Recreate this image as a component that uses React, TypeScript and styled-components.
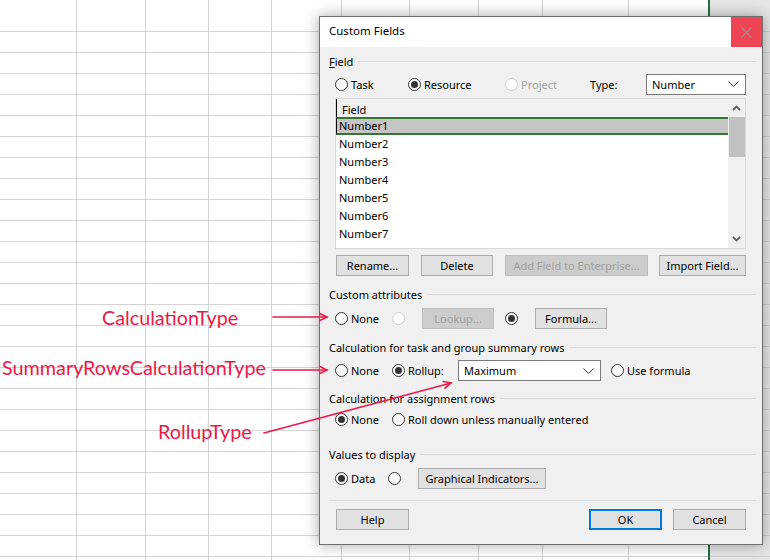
import { createGlobalStyle, styled } from "styled-components";

const GlobalStyle = createGlobalStyle`
  html, body {
    margin: 0;
    padding: 0;
  }
  body {
    width: 770px;
    height: 560px;
    overflow: hidden;
    background: #ffffff;
    font-family: "Noto Sans", "Open Sans", sans-serif;
  }
`;

const Desktop = styled.div`
  position: relative;
  width: 770px;
  height: 560px;
  overflow: hidden;
`;

// spreadsheet behind the dialog
const Sheet = styled.div`
  display: flex;
  height: 100%;
`;

const SheetColumn = styled.div<{ $w: number; $last?: boolean }>`
  flex: 0 0 ${(p) => p.$w}px;
  box-sizing: border-box;
  border-right: ${(p) => (p.$last ? "none" : "1px solid #d4d4d4")};
  background-image: repeating-linear-gradient(to bottom, transparent 0 20px, #d4d4d4 20px 21px);
  background-position: 0 11px;
`;

const Splitter = styled.div`
  flex: 0 0 2px;
  background: #217346;
`;

const GrayPane = styled.div`
  flex: 1;
  background-color: #e6e6e6;
  background-image: repeating-linear-gradient(to bottom, transparent 0 20px, #cdcdcd 20px 21px);
  background-position: 0 11px;
`;

// dialog
const Dialog = styled.div`
  position: absolute;
  left: 319px;
  top: 16px;
  width: 444px;
  box-sizing: border-box;
  border: 1px solid #6f6f6f;
  background: #f0f0f0;
  box-shadow: 0 0 14px rgba(0, 0, 0, 0.35);
  font-size: 11px;
  color: #000;
  display: flex;
  flex-direction: column;
`;

const TitleBar = styled.div`
  height: 30px;
  background: #ffffff;
  display: flex;
  align-items: center;
`;

const Title = styled.div`
  flex: 1;
  padding: 0 0 3px 9px;
  font-size: 11.5px;
`;

const CloseButton = styled.div`
  width: 31px;
  height: 30px;
  background: #ef4454;
  display: flex;
  align-items: center;
  justify-content: center;
`;

const Body = styled.div`
  padding: 0 6px 14px 9px;
  display: flex;
  flex-direction: column;
`;

const GroupHeader = styled.div<{ $mt: number }>`
  margin-top: ${(p) => p.$mt}px;
  height: 16px;
  line-height: 15px;
  display: flex;
  align-items: center;
  gap: 5px;
  white-space: nowrap;
  &::after {
    content: "";
    flex: 1;
    border-top: 1px solid #dcdcdc;
  }
`;

const Row = styled.div<{ $mt: number; $h?: number; $pl?: number }>`
  margin-top: ${(p) => p.$mt}px;
  height: ${(p) => p.$h ?? 20}px;
  padding-left: ${(p) => p.$pl ?? 6}px;
  display: flex;
  align-items: center;
  white-space: nowrap;
`;

const RadioOption = styled.label<{ $w?: number; $disabled?: boolean }>`
  display: inline-flex;
  align-items: center;
  gap: 3px;
  flex: none;
  width: ${(p) => (p.$w ? `${p.$w}px` : "auto")};
  color: ${(p) => (p.$disabled ? "#a0a0a0" : "#000")};
`;

const RadioCircle = styled.span<{ $checked?: boolean; $disabled?: boolean }>`
  width: 13px;
  height: 13px;
  box-sizing: border-box;
  border-radius: 50%;
  border: 1px solid ${(p) => (p.$disabled ? "#cccccc" : "#333333")};
  background: #ffffff;
  display: inline-flex;
  align-items: center;
  justify-content: center;
  flex: none;
  &::after {
    content: "";
    width: 7px;
    height: 7px;
    border-radius: 50%;
    background: #333333;
    display: ${(p) => (p.$checked ? "block" : "none")};
  }
`;

const FieldLabel = styled.span<{ $w: number }>`
  width: ${(p) => p.$w}px;
  flex: none;
`;

const Select = styled.div<{ $w: number }>`
  width: ${(p) => p.$w}px;
  height: 21px;
  box-sizing: border-box;
  border: 1px solid #7a7a7a;
  background: #ffffff;
  display: flex;
  align-items: center;
  justify-content: space-between;
  padding: 0 6px 0 5px;
  flex: none;
`;

const Button = styled.button<{ $w: number; $primary?: boolean; $ml?: number }>`
  width: ${(p) => p.$w}px;
  height: 21px;
  margin-left: ${(p) => p.$ml ?? 0}px;
  flex: none;
  box-sizing: border-box;
  padding: 0;
  font-family: inherit;
  font-size: 11px;
  color: #000;
  background: #e1e1e1;
  border: ${(p) => (p.$primary ? "2px solid #0078d7" : "1px solid #adadad")};
  &:disabled {
    background: #cccccc;
    border-color: #bfbfbf;
    color: #a0a0a0;
  }
`;

const ListBox = styled.div`
  margin: 4px 0 0 6px;
  width: 411px;
  height: 151px;
  box-sizing: border-box;
  border: 1px solid #d9d9d9;
  background: #ffffff;
  display: flex;
  overflow: hidden;
`;

const ListBody = styled.div`
  flex: 1;
  overflow: hidden;
  display: flex;
  flex-direction: column;
`;

const ListHeader = styled.div`
  height: 18px;
  flex: none;
  box-sizing: border-box;
  padding: 3px 0 0 5px;
  line-height: 15px;
  background: #f0f0f0;
  border-left: 1px solid #000;
`;

const ListRow = styled.div<{ $selected?: boolean }>`
  height: 18px;
  flex: none;
  box-sizing: border-box;
  display: flex;
  align-items: center;
  padding-left: ${(p) => (p.$selected ? 2 : 3)}px;
  padding-bottom: 1px;
  background: ${(p) => (p.$selected ? "#c5c5c5" : "transparent")};
  border-top: ${(p) => (p.$selected ? "2px solid #317731" : "none")};
  border-bottom: ${(p) => (p.$selected ? "2px solid #317731" : "none")};
  border-left: ${(p) => (p.$selected ? "1px solid #000" : "none")};
`;

const ScrollBar = styled.div`
  width: 17px;
  flex: none;
  background: #f0f0f0;
  display: flex;
  flex-direction: column;
`;

const ScrollArrow = styled.div`
  height: 18px;
  flex: none;
  display: flex;
  align-items: center;
  justify-content: center;
`;

const ScrollThumb = styled.div`
  height: 40px;
  margin: 0 0 0 1px;
  background: #c1c1c1;
`;

const ScrollTrack = styled.div`
  flex: 1;
`;

const Divider = styled.div<{ $mt: number }>`
  margin-top: ${(p) => p.$mt}px;
  height: 1px;
  background: #dcdcdc;
`;

const Spacer = styled.div<{ $w: number }>`
  width: ${(p) => p.$w}px;
  flex: none;
`;

// annotations drawn over the screenshot
const Callout = styled.div<{ $x: number; $y: number }>`
  position: absolute;
  left: ${(p) => p.$x}px;
  top: ${(p) => p.$y}px;
  font-family: "Lato", "Noto Sans", sans-serif;
  font-size: 19.8px;
  line-height: 24px;
  color: #e91a47;
  white-space: nowrap;
  z-index: 2;
`;

const Overlay = styled.svg`
  position: absolute;
  left: 0;
  top: 0;
  z-index: 3;
  pointer-events: none;
`;

const Chevron = ({ up }: { up?: boolean }) => (
  <svg width="9" height="6" viewBox="0 0 9 6">
    <path
      d={up ? "M1 5 L4.5 1.5 L8 5" : "M1 1 L4.5 4.5 L8 1"}
      fill="none"
      stroke="#606060"
      strokeWidth="1.8"
    />
  </svg>
);

const DropArrow = () => (
  <svg width="11" height="6" viewBox="0 0 11 6">
    <path d="M0.5 0.5 L5.5 5.5 L10.5 0.5" fill="none" stroke="#333" strokeWidth="1" />
  </svg>
);

function Arrow({ x1, y1, x2, y2 }: { x1: number; y1: number; x2: number; y2: number }) {
  const a = Math.atan2(y2 - y1, x2 - x1);
  const len = 8;
  const spread = 0.45;
  const p1 = [x2 - len * Math.cos(a - spread), y2 - len * Math.sin(a - spread)];
  const p2 = [x2 - len * Math.cos(a + spread), y2 - len * Math.sin(a + spread)];
  return (
    <g stroke="#e91a47" strokeWidth="1.6" fill="none" strokeLinecap="round">
      <line x1={x1} y1={y1} x2={x2} y2={y2} />
      <polyline points={`${p1[0]},${p1[1]} ${x2},${y2} ${p2[0]},${p2[1]}`} />
    </g>
  );
}

const sheetColumns = [77, 69, 63, 63, 70, 68, 69, 64, 86];
const fields = ["Number1", "Number2", "Number3", "Number4", "Number5", "Number6", "Number7", "Number8"];

export default function App() {
  return (
    <Desktop>
      <GlobalStyle />
      <Sheet>
        {sheetColumns.map((w, i) => (
          <SheetColumn key={i} $w={w} />
        ))}
        <SheetColumn $w={79} $last />
        <Splitter />
        <GrayPane />
      </Sheet>

      <Dialog>
        <TitleBar>
          <Title>Custom Fields</Title>
          <CloseButton>
            <svg width="11" height="11" viewBox="0 0 11 11">
              <path d="M0.5 0.5 L10.5 10.5 M10.5 0.5 L0.5 10.5" stroke="#b4828a" strokeWidth="1.2" />
            </svg>
          </CloseButton>
        </TitleBar>

        <Body>
          <GroupHeader $mt={6}>
            <span>
              <u>F</u>ield
            </span>
          </GroupHeader>
          <Row $mt={5}>
            <RadioOption $w={73}>
              <RadioCircle />
              Task
            </RadioOption>
            <RadioOption $w={97}>
              <RadioCircle $checked />
              Resource
            </RadioOption>
            <RadioOption $w={85} $disabled>
              <RadioCircle $disabled />
              Project
            </RadioOption>
            <FieldLabel $w={56}>Type:</FieldLabel>
            <Select $w={100}>
              Number
              <DropArrow />
            </Select>
          </Row>

          <ListBox>
            <ListBody>
              <ListHeader>Field</ListHeader>
              {fields.map((f, i) => (
                <ListRow key={f} $selected={i === 0}>
                  {f}
                </ListRow>
              ))}
            </ListBody>
            <ScrollBar>
              <ScrollArrow>
                <Chevron up />
              </ScrollArrow>
              <ScrollThumb />
              <ScrollTrack />
              <ScrollArrow>
                <Chevron />
              </ScrollArrow>
            </ScrollBar>
          </ListBox>

          <Row $mt={6} $h={21} $pl={7}>
            <Button $w={73}>Rename...</Button>
            <Button $w={72} $ml={12}>
              Delete
            </Button>
            <Button $w={143} $ml={12} disabled>
              Add Field to Enterprise...
            </Button>
            <Button $w={87} $ml={11}>
              Import Field...
            </Button>
          </Row>

          <GroupHeader $mt={10}>Custom attributes</GroupHeader>
          <Row $mt={6} $h={21}>
            <RadioOption $w={57}>
              <RadioCircle />
              None
            </RadioOption>
            <RadioCircle $disabled />
            <Button $w={72} $ml={17} disabled>
              Lookup...
            </Button>
            <Spacer $w={11} />
            <RadioCircle $checked />
            <Button $w={72} $ml={17}>
              Formula...
            </Button>
          </Row>

          <GroupHeader $mt={10}>Calculation for task and group summary rows</GroupHeader>
          <Row $mt={5} $h={21}>
            <RadioOption $w={57}>
              <RadioCircle />
              None
            </RadioOption>
            <RadioOption $w={66}>
              <RadioCircle $checked />
              Rollup:
            </RadioOption>
            <Select $w={143}>
              Maximum
              <DropArrow />
            </Select>
            <Spacer $w={10} />
            <RadioOption>
              <RadioCircle />
              Use formula
            </RadioOption>
          </Row>

          <GroupHeader $mt={9}>Calculation for assignment rows</GroupHeader>
          <Row $mt={3}>
            <RadioOption $w={57}>
              <RadioCircle $checked />
              None
            </RadioOption>
            <RadioOption>
              <RadioCircle />
              Roll down unless manually entered
            </RadioOption>
          </Row>

          <GroupHeader $mt={17}>Values to display</GroupHeader>
          <Row $mt={6} $h={21}>
            <RadioOption $w={53}>
              <RadioCircle $checked />
              Data
            </RadioOption>
            <RadioCircle />
            <Button $w={128} $ml={17}>
              Graphical Indicators...
            </Button>
          </Row>

          <Divider $mt={11} />

          <Row $mt={8} $h={21} $pl={7}>
            <Button $w={73}>Help</Button>
            <Button $w={73} $ml={180} $primary>
              OK
            </Button>
            <Button $w={73} $ml={11}>
              Cancel
            </Button>
          </Row>
        </Body>
      </Dialog>

      <Callout $x={102} $y={305}>
        CalculationType
      </Callout>
      <Callout $x={2} $y={355}>
        SummaryRowsCalculationType
      </Callout>
      <Callout $x={158} $y={419}>
        RollupType
      </Callout>

      <Overlay width="770" height="560" viewBox="0 0 770 560">
        <Arrow x1={273} y1={317} x2={327} y2={317} />
        <Arrow x1={273} y1={370} x2={327} y2={370} />
        <Arrow x1={264} y1={433} x2={451} y2={383} />
      </Overlay>
    </Desktop>
  );
}
